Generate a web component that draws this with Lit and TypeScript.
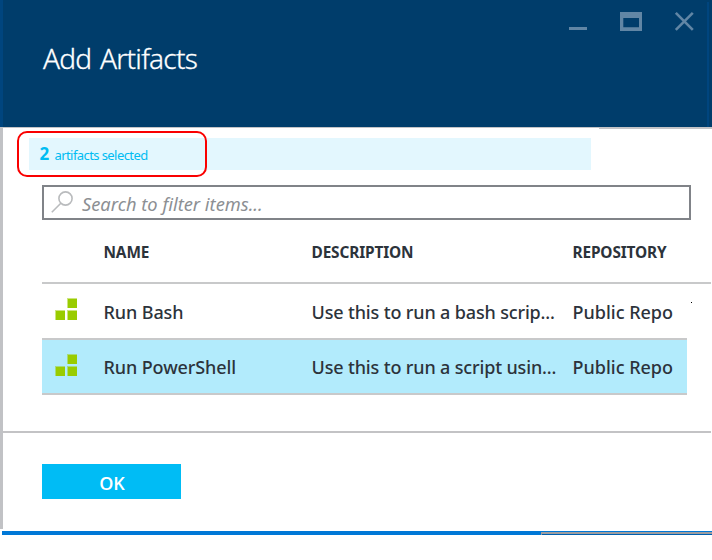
import { LitElement, html, css, svg } from "lit";
import { customElement, property } from "lit/decorators.js";
import { classMap } from "lit/directives/class-map.js";

interface Artifact {
  name: string;
  description: string;
  repository: string;
  selected: boolean;
}

const artifacts: Artifact[] = [
  { name: "Run Bash", description: "Use this to run a bash scrip...", repository: "Public Repo", selected: false },
  { name: "Run PowerShell", description: "Use this to run a script usin...", repository: "Public Repo", selected: true },
];

const block = (x: number, y: number) => svg`
  <rect x=${x} y=${y} width="10" height="10" fill="#99cc00" fill-opacity="0.5"></rect>
  <rect x=${x + 1} y=${y + 1} width="9" height="9" fill="#99cc00"></rect>`;

@customElement("blade-header")
export class BladeHeader extends LitElement {
  @property() heading = "";

  static styles = css`
    :host {
      display: flex;
      justify-content: space-between;
      box-sizing: border-box;
      height: 127px;
      padding: 0 14px 0 40px;
      background: #003d6b;
      border-left: 3px solid #00457e;
      background-image: linear-gradient(#00457e, #00457e);
      background-size: 2px 125px;
      background-position: 704px 2px;
      background-repeat: no-repeat;
    }
    h1 {
      margin: 39px 0 0;
      font: 300 28px/38px "Noto Sans", "Open Sans", sans-serif;
      letter-spacing: -0.75px;
      word-spacing: 2.200px;
      color: #fff;
      -webkit-text-stroke: 0.3px #fff;
    }
    .controls {
      display: block;
      margin-top: 8px;
    }
  `;

  render() {
    return html`
      <h1>${this.heading}</h1>
      <svg class="controls" width="132" height="28" viewBox="0 0 132 28" fill="#6186a5">
        <rect x="3" y="19" width="18" height="3"></rect>
        <path fill-rule="evenodd" d="M54 4h22v19H54zM57.3 10v9.300h15.700V10z"></path>
        <path d="M109.800 4.800L126.800 21.800M126.800 4.800L109.800 21.800" stroke="#6186a5" stroke-width="2.600"></path>
      </svg>
    `;
  }
}

@customElement("artifact-table")
export class ArtifactTable extends LitElement {
  @property({ attribute: false }) items: Artifact[] = [];

  static styles = css`
    :host {
      display: block;
      font-family: "Noto Sans", "Open Sans", sans-serif;
      color: #2c333b;
    }
    .row {
      display: grid;
      grid-template-columns: 61.500px 208px 261px 1fr;
      align-items: center;
      box-sizing: border-box;
      width: 645px;
      white-space: nowrap;
      border-bottom: 2px solid #c8c9ca;
      font-size: 18px;
      font-weight: 500;
      line-height: 24px;
    }
    .row span {
      padding-top: 2px;
    }
    .item .name {
      letter-spacing: -0.1px;
    }
    .item .description {
      letter-spacing: -0.15px;
    }
    .head {
      width: 669px;
      height: 64px;
      font-size: 15.400px;
      font-weight: 700;
      letter-spacing: -0.14px;
    }
    .head span {
      padding-top: 4px;
    }
    .item {
      position: relative;
      height: 56px;
    }
    .item.selected {
      height: 55px;
      background: #b2ebfc;
    }
    .item.selected span {
      padding-top: 1px;
    }
    .icon {
      display: block;
      margin: 0 0 4px 13px;
    }
    .selected .icon {
      margin-bottom: 3px;
    }
    .speck {
      position: absolute;
      left: 649px;
      top: 18px;
      width: 1px;
      height: 1px;
      background: #000;
    }
  `;

  render() {
    return html`
      <div class="row head">
        <i></i><span>NAME</span><span>DESCRIPTION</span><span>REPOSITORY</span>
      </div>
      ${this.items.map(
        (a) => html`
          <div class=${classMap({ row: true, item: true, selected: a.selected })}>
            <svg class="icon" width="22" height="22" viewBox="0 0 22 22">
              ${block(12, 0)}${block(0, 12)}${block(12, 12)}
            </svg>
            <span class="name">${a.name}</span><span class="description">${a.description}</span><span>${a.repository}</span>
            ${a.selected ? "" : html`<div class="speck"></div>`}
          </div>
        `
      )}
    `;
  }
}

@customElement("app-root")
export class AppRoot extends LitElement {
  static styles = css`
    :host {
      display: block;
      height: 560px;
      background: #fff;
      overflow: hidden;
      font-family: "Noto Sans", "Open Sans", sans-serif;
    }
    .body {
      box-sizing: border-box;
      height: 402px;
      border-left: 3px solid #c1c2c5;
      border-top: 1px solid #c3c4c7;
    }
    .edge {
      width: 113px;
      height: 1px;
      margin-left: 596px;
      background: #c3c4c7;
    }
    .banner {
      position: relative;
      display: flex;
      align-items: baseline;
      box-sizing: border-box;
      width: 562px;
      height: 32px;
      margin: 9px 0 0 26px;
      padding-left: 10.500px;
      background: #e3f7fe;
      color: #00bcf2;
      line-height: 32px;
    }
    .count {
      width: 15px;
      font-size: 17px;
      font-weight: 700;
    }
    .label {
      font-size: 13px;
      letter-spacing: -0.58px;
    }
    .highlight {
      position: absolute;
      left: -12px;
      top: -7px;
      box-sizing: border-box;
      width: 190px;
      height: 46px;
      border: 2px solid #fa0000;
      border-radius: 10px;
    }
    .search {
      display: flex;
      align-items: center;
      box-sizing: border-box;
      width: 649px;
      height: 35px;
      margin: 15px 0 0 39px;
      padding-left: 7px;
      border: 2px solid #808388;
      font-size: 18.300px;
      font-style: italic;
      line-height: 31px;
      color: #8c8f93;
    }
    .search span {
      margin-left: 7px;
      padding-top: 1px;
    }
    artifact-table {
      margin-left: 39px;
    }
    .footer {
      box-sizing: border-box;
      width: 708px;
      height: 98px;
      margin-top: 36px;
      padding: 31px 0 0 39px;
      border-top: 2px solid #c3c3c5;
    }
    .ok {
      display: block;
      width: 139px;
      height: 35px;
      padding: 3px 0 0 1px;
      border: 0;
      background: #00bcf5;
      color: #fff;
      font: 600 18px/32px "Open Sans", "Noto Sans", sans-serif;
      text-align: center;
    }
    .taskbar {
      display: flex;
      justify-content: flex-end;
      box-sizing: border-box;
      height: 4px;
      margin: 2px 0 0 2px;
      padding-top: 1px;
      background: #0078d7;
    }
    .window {
      box-sizing: border-box;
      width: 171px;
      height: 3px;
      border-top: 2px solid #9d9da0;
      border-left: 1px solid #9d9da0;
      background: #005fae;
    }
  `;

  render() {
    return html`
      <blade-header heading="Add Artifacts"></blade-header>
      <div class="body">
        <div class="edge"></div>
        <div class="banner">
          <span class="count">2</span><span class="label">artifacts selected</span>
          <div class="highlight"></div>
        </div>
        <div class="search">
          <svg width="24" height="24" viewBox="0 0 24 24" fill="none" stroke="#b9bbbd" stroke-width="1.600">
            <circle cx="14.500" cy="7.500" r="6.600"></circle>
            <path d="M9.800 12.200L0.800 21.200"></path>
          </svg>
          <span>Search to filter items...</span>
        </div>
        <artifact-table .items=${artifacts}></artifact-table>
        <div class="footer"><button class="ok">OK</button></div>
      </div>
      <div class="taskbar"><div class="window"></div></div>
    `;
  }
}
